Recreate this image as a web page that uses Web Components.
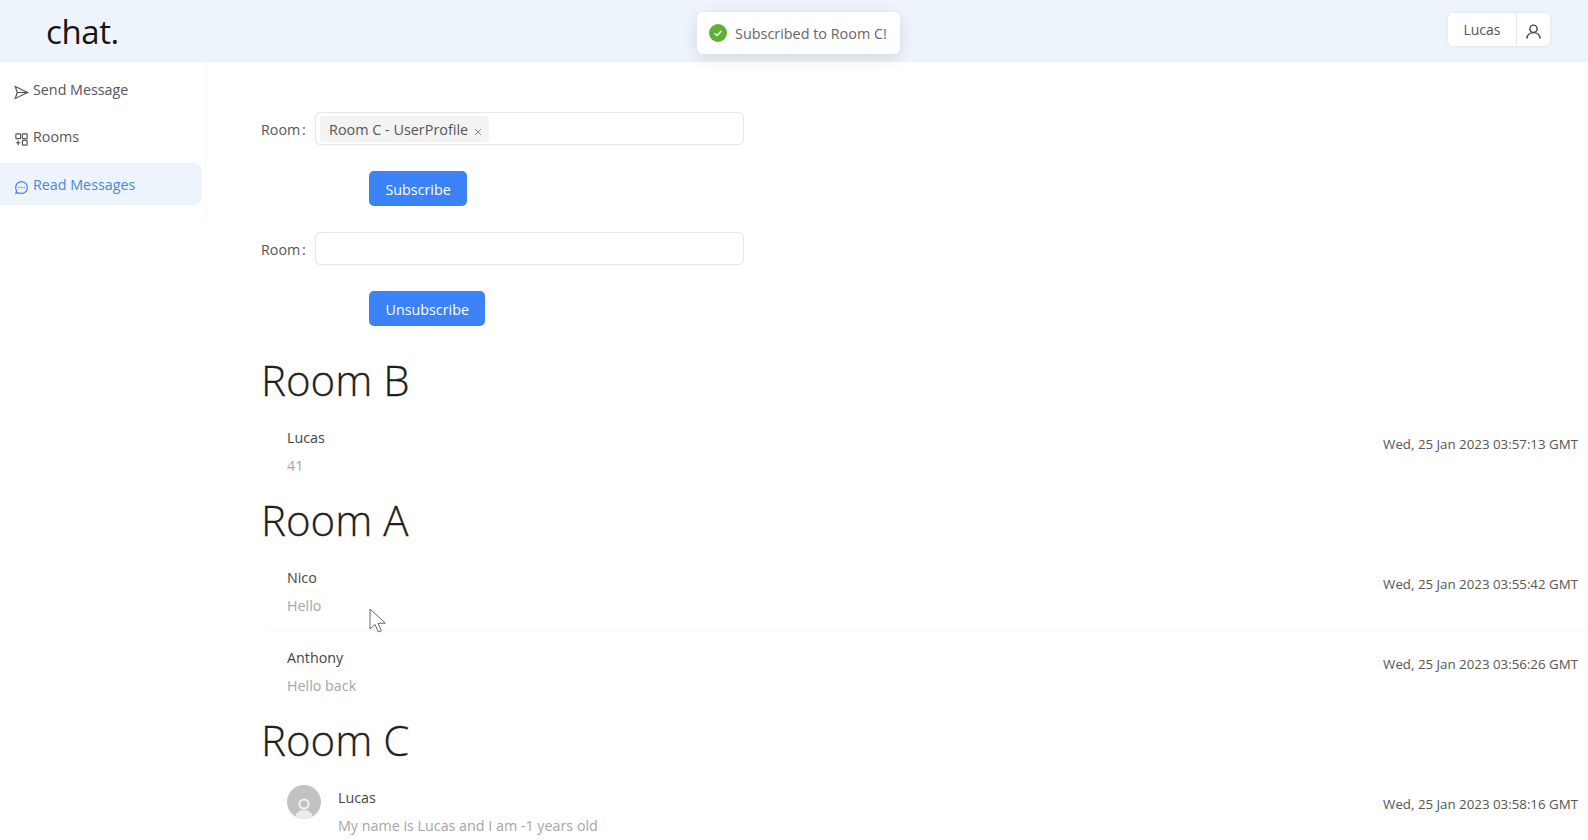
<!DOCTYPE html>
<html>
<head>
<meta charset="utf-8">
<title>chat.</title>
<style>
  html, body { margin: 0; height: 100%; overflow: hidden; background: #fff; }
  body { font-family: "Open Sans", "Noto Sans", sans-serif; color: #333; }
</style>
</head>
<body>
<chat-app>
  <chat-header slot="header" user="Lucas"></chat-header>
  <side-nav slot="nav">
    <nav-item icon="send">Send Message</nav-item>
    <nav-item icon="rooms">Rooms</nav-item>
    <nav-item icon="read" active>Read Messages</nav-item>
  </side-nav>
  <room-form label="Room" action="Subscribe" tag="Room C - UserProfile"></room-form>
  <room-form label="Room" action="Unsubscribe" last></room-form>
  <room-section name="Room B">
    <message-item user="Lucas" text="41" time="Wed, 25 Jan 2023 03:57:13 GMT"></message-item>
  </room-section>
  <room-section name="Room A">
    <message-item user="Nico" text="Hello" time="Wed, 25 Jan 2023 03:55:42 GMT"></message-item>
    <message-item user="Anthony" text="Hello back" time="Wed, 25 Jan 2023 03:56:26 GMT" divider></message-item>
  </room-section>
  <room-section name="Room C">
    <message-item user="Lucas" text="My name is Lucas and I am -1 years old" time="Wed, 25 Jan 2023 03:58:16 GMT" avatar></message-item>
  </room-section>
</chat-app>
<toast-notice>Subscribed to Room C!</toast-notice>
<mouse-cursor></mouse-cursor>

<script>
const userPath = '<circle cx="12" cy="8.5" r="4.6"/><path d="M3.5 21c.6-4.8 3.8-7.6 8.5-7.6s7.9 2.8 8.5 7.6"/>';

const navIcons = {
  send: '<path d="M2 2.5 22 12 2 21.5 5.2 12Z"/><path d="M5.2 12H22"/>',
  rooms: '<rect x="3" y="3" width="7.5" height="7.5" rx="1"/><rect x="13.5" y="3" width="7.5" height="7.5" rx="1"/><rect x="13.5" y="13.5" width="7.5" height="7.5" rx="1"/><path d="M6.7 13.5v7.5M3 17.2h7.5"/>',
  read: '<path d="M12 2.5a9.5 9.5 0 1 1-4.6 17.8L3 21.5l1.2-4.3A9.5 9.5 0 0 1 12 2.5Z"/><g fill="currentColor" stroke="none"><circle cx="7.8" cy="12" r="1.2"/><circle cx="12" cy="12" r="1.2"/><circle cx="16.2" cy="12" r="1.2"/></g>'
};

class ChatApp extends HTMLElement {
  constructor() {
    super();
    this.attachShadow({ mode: 'open' });
    this.shadowRoot.innerHTML = `
      <style>
        :host { display: block; height: 840px; overflow: hidden; }
        .body { display: flex; }
        main { flex: 1; min-width: 0; padding: 50px 0 0 54px; }
        .nav { flex: none; width: 207px; }
      </style>
      <slot name="header"></slot>
      <div class="body">
        <div class="nav"><slot name="nav"></slot></div>
        <main><slot></slot></main>
      </div>
    `;
  }
}

class ChatHeader extends HTMLElement {
  constructor() {
    super();
    this.attachShadow({ mode: 'open' });
  }

  connectedCallback() {
    this.shadowRoot.innerHTML = `
      <style>
        :host { display: flex; align-items: center; justify-content: space-between; height: 62px; background: #eef4fc; padding: 0 38px 0 46px; box-sizing: border-box; }
        .logo { font-size: 33px; color: #151515; letter-spacing: -.4px; line-height: 62px; margin-top: 2px; }
        .user { display: flex; height: 33px; margin-top: -4px; background: #fff; border-radius: 5px; box-shadow: 0 0 3px rgba(0,0,0,.1); }
        .name { width: 68px; display: flex; align-items: center; justify-content: center; font-size: 14px; color: #555; }
        .btn { width: 33px; display: flex; align-items: center; justify-content: center; border-left: 1px solid #e6e6e6; }
        svg { width: 19px; height: 19px; fill: none; stroke: #444; stroke-width: 1.8; margin-top: 5px; }
      </style>
      <div class="logo">chat.</div>
      <div class="user">
        <div class="name">${this.getAttribute('user')}</div>
        <div class="btn"><svg viewBox="0 0 24 24">${userPath}</svg></div>
      </div>
    `;
  }
}

class SideNav extends HTMLElement {
  constructor() {
    super();
    this.attachShadow({ mode: 'open' });
    this.shadowRoot.innerHTML = `
      <style>
        :host { display: flex; flex-direction: column; gap: 5.5px; height: 160px; padding: 6px 3px 0 0; box-sizing: border-box; border-right: 2px solid #fbfbfb; }
      </style>
      <slot></slot>
    `;
  }
}

class NavItem extends HTMLElement {
  constructor() {
    super();
    this.attachShadow({ mode: 'open' });
  }

  connectedCallback() {
    this.shadowRoot.innerHTML = `
      <style>
        :host { display: flex; align-items: center; height: 42px; padding-left: 14px; font-size: 14.3px; color: #555; border-radius: 0 7px 7px 0; }
        :host([active]) { background: #eef4fc; color: #4a86e0; }
        svg { width: 15px; height: 15px; fill: none; stroke: currentColor; stroke-width: 1.9; margin: 6px 4px 0 0; flex: none; }
      </style>
      <svg viewBox="0 0 24 24">${navIcons[this.getAttribute('icon')]}</svg>
      <span><slot></slot></span>
    `;
  }
}

class RoomForm extends HTMLElement {
  constructor() {
    super();
    this.attachShadow({ mode: 'open' });
  }

  connectedCallback() {
    const tag = this.getAttribute('tag');
    this.shadowRoot.innerHTML = `
      <style>
        :host { display: block; margin-bottom: 26px; }
        :host([last]) { margin-bottom: 25px; }
        .row { display: flex; align-items: center; gap: 8px; font-size: 14.3px; color: #555; }
        .box { width: 429px; height: 33px; box-sizing: border-box; border: 1px solid #e8e8e8; border-radius: 6px; background: #fff; display: flex; align-items: center; padding-left: 4px; box-shadow: 0 0 2px rgba(0,0,0,.06); }
        .tag { display: flex; align-items: center; height: 26px; padding: 2px 7px 0 9px; box-sizing: border-box; background: #f3f3f3; border-radius: 3px; font-size: 14.4px; color: #555; }
        .x { width: 8px; height: 8px; margin: 4px 0 0 6px; stroke: #888; stroke-width: 1; fill: none; }
        button { display: block; margin: 26px 0 0 108px; height: 35px; padding: 2px 16.5px 0; border: 0; border-radius: 5px; background: #3b82f6; color: #fff; font: inherit; font-size: 14.3px; }
        .label { width: 46px; white-space: nowrap; word-spacing: -2px; padding-top: 2px; }
      </style>
      <div class="row">
        <span class="label">${this.getAttribute('label')} :</span>
        <div class="box">${tag ? `<div class="tag">${tag}<svg class="x" viewBox="0 0 8 8"><path d="M1 1l6 6M7 1 1 7"/></svg></div>` : ''}</div>
      </div>
      <button type="button">${this.getAttribute('action')}</button>
    `;
  }
}

class RoomSection extends HTMLElement {
  constructor() {
    super();
    this.attachShadow({ mode: 'open' });
  }

  connectedCallback() {
    this.shadowRoot.innerHTML = `
      <style>
        :host { display: block; }
        h2 { margin: 0; height: 60px; line-height: 57px; font-size: 42px; font-weight: 300; color: #1f1f1f; -webkit-text-stroke: .3px #1f1f1f; }
      </style>
      <h2>${this.getAttribute('name')}</h2>
      <slot></slot>
    `;
  }
}

class MessageItem extends HTMLElement {
  constructor() {
    super();
    this.attachShadow({ mode: 'open' });
  }

  connectedCallback() {
    this.shadowRoot.innerHTML = `
      <style>
        :host { display: flex; align-items: center; height: 80px; box-sizing: border-box; margin-left: 8px; padding: 0 10px 0 18px; }
        :host([divider]) { box-shadow: 0 -1px 0 #f5f5f5; }
        .avatar { width: 34px; height: 34px; border-radius: 50%; background: #c2c2c2; margin: 0 17px 0 0; overflow: hidden; position: relative; top: -9px; flex: none; }
        .avatar svg { display: block; width: 34px; height: 34px; }
        .text { flex: 1; min-width: 0; padding-top: 2px; }
        .user { font-size: 14.3px; line-height: 24px; color: #444; margin-bottom: 4px; }
        .msg { font-size: 14.3px; line-height: 24px; color: #a6a6a6; }
        .time { font-size: 13.3px; color: #555; margin-top: -14px; }
      </style>
      ${this.hasAttribute('avatar') ? `<div class="avatar"><svg viewBox="0 0 34 34"><circle cx="17" cy="19" r="4.6" fill="none" stroke="#f2f2f2" stroke-width="2"/><path d="M8 34c0-6 4-9 9-9s9 3 9 9Z" fill="#ececec"/></svg></div>` : ''}
      <div class="text">
        <div class="user">${this.getAttribute('user')}</div>
        <div class="msg">${this.getAttribute('text')}</div>
      </div>
      <div class="time">${this.getAttribute('time')}</div>
    `;
  }
}

class ToastNotice extends HTMLElement {
  constructor() {
    super();
    this.attachShadow({ mode: 'open' });
    this.shadowRoot.innerHTML = `
      <style>
        :host { position: absolute; left: 697px; top: 12px; height: 42px; width: 203px; box-sizing: border-box; display: flex; align-items: center; padding-left: 12px; gap: 8px; background: #fff; border-radius: 6px; box-shadow: 0 4px 16px rgba(0,0,0,.12); font-size: 14.4px; color: #666; white-space: nowrap; }
        svg { width: 18px; height: 18px; flex: none; }
      </style>
      <svg viewBox="0 0 18 18"><circle cx="9" cy="9" r="9" fill="#5fae36"/><path d="M5.5 9.2 8 11.5l4.4-4.6" fill="none" stroke="#fff" stroke-width="1.4"/></svg>
      <slot></slot>
    `;
  }
}

class MouseCursor extends HTMLElement {
  constructor() {
    super();
    this.attachShadow({ mode: 'open' });
    this.shadowRoot.innerHTML = `
      <style>
        :host { position: absolute; left: 369px; top: 608px; width: 18px; height: 26px; }
        svg { display: block; }
      </style>
      <svg width="18" height="26" viewBox="0 0 18 26"><path d="M1 1v20l5-4.6 3.4 7.6 3-1.3-3.4-7.3 7.3-.3Z" fill="#fff" stroke="#666" stroke-width="1"/></svg>
    `;
  }
}

customElements.define('chat-app', ChatApp);
customElements.define('chat-header', ChatHeader);
customElements.define('side-nav', SideNav);
customElements.define('nav-item', NavItem);
customElements.define('room-form', RoomForm);
customElements.define('room-section', RoomSection);
customElements.define('message-item', MessageItem);
customElements.define('toast-notice', ToastNotice);
customElements.define('mouse-cursor', MouseCursor);
</script>
</body>
</html>
